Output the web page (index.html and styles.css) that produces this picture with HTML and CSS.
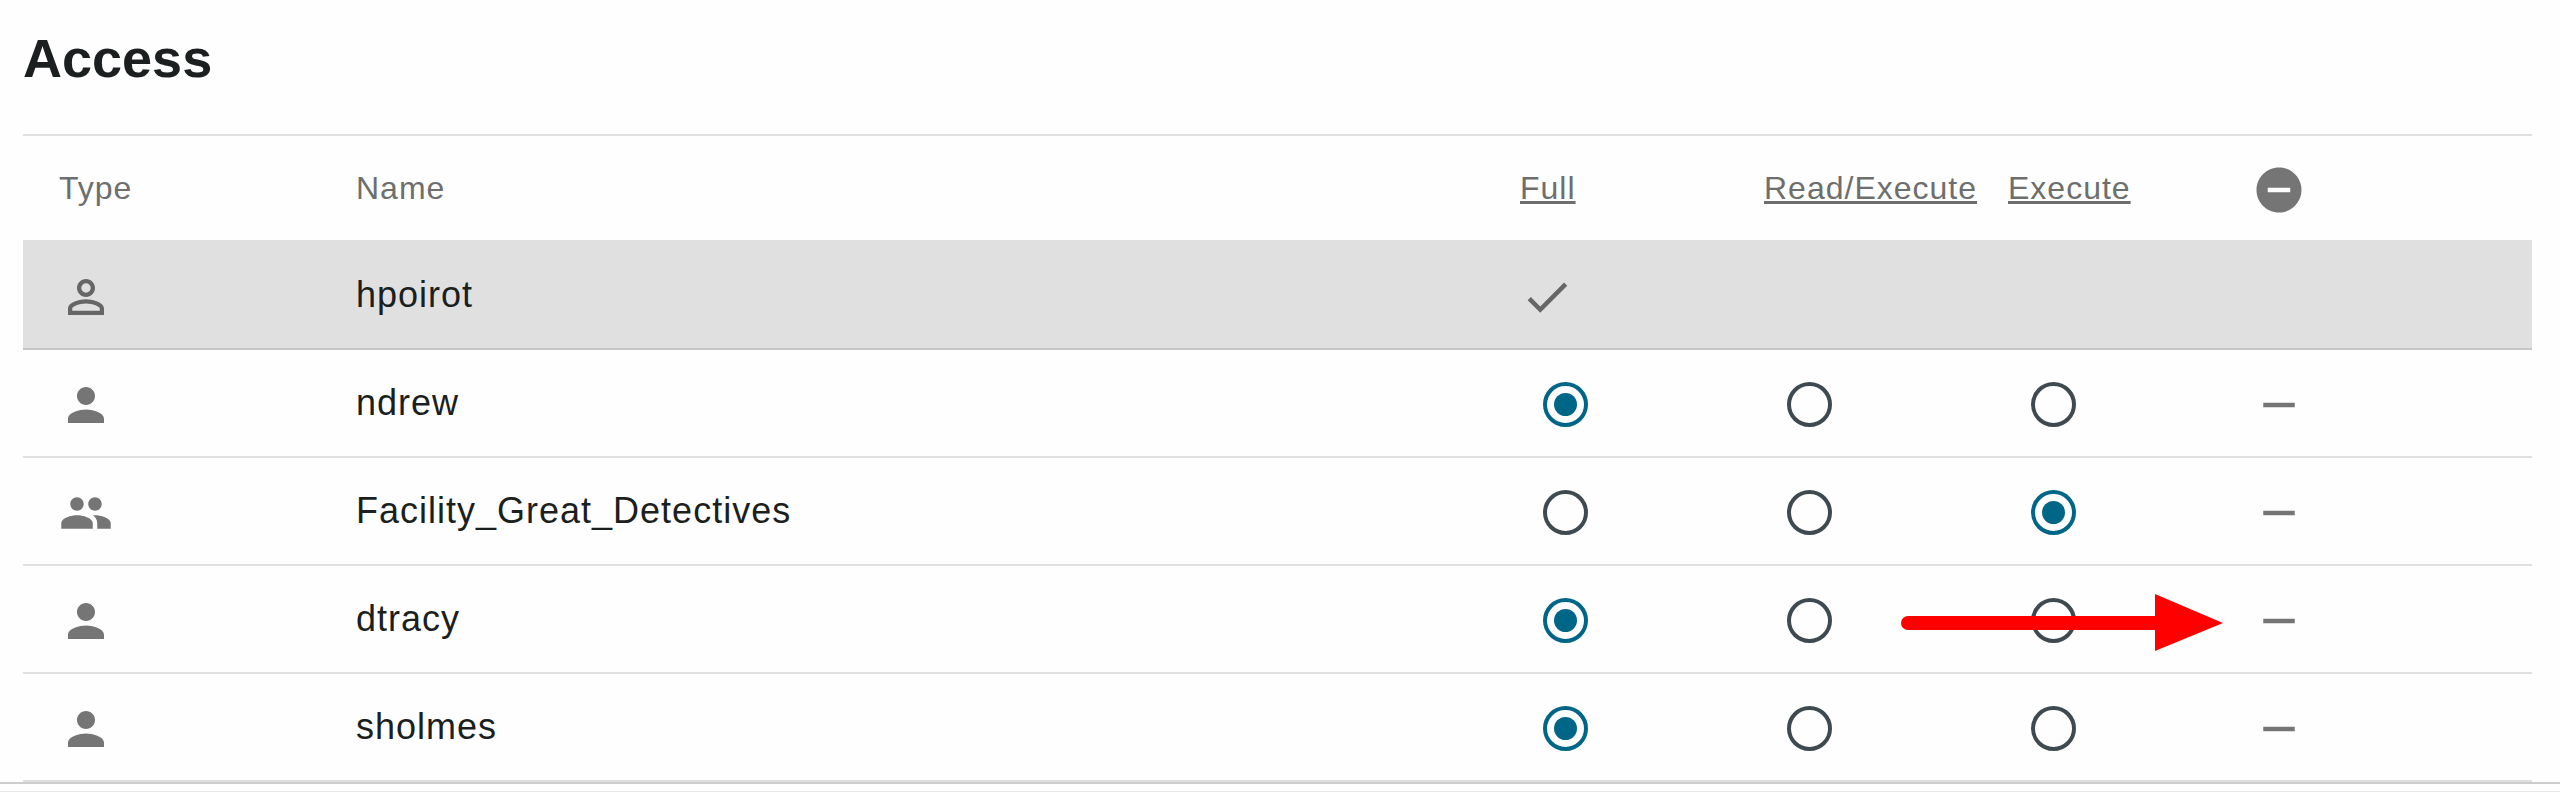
FILE: index.html
```html
<!DOCTYPE html>
<html lang="en">
<head>
<meta charset="utf-8">
<title>Access</title>
<link rel="stylesheet" href="styles.css">
</head>
<body>
<svg class="sprite" aria-hidden="true">
  <symbol id="person" viewBox="0 0 24 24"><path d="M12 12c2.21 0 4-1.79 4-4s-1.79-4-4-4-4 1.79-4 4 1.79 4 4 4zm0 2c-2.67 0-8 1.34-8 4v2h16v-2c0-2.66-5.33-4-8-4z"/></symbol>
  <symbol id="owner" viewBox="0 0 24 24"><path d="M12 5.9a2.1 2.1 0 1 1 0 4.2 2.1 2.1 0 0 1 0-4.2m0 9c2.97 0 6.1 1.46 6.1 2.1v1.1H5.9V17c0-.64 3.13-2.1 6.1-2.1M12 4C9.79 4 8 5.79 8 8s1.79 4 4 4 4-1.79 4-4-1.79-4-4-4zm0 9c-2.67 0-8 1.34-8 4v3h16v-3c0-2.66-5.33-4-8-4z"/></symbol>
  <symbol id="group" viewBox="0 0 24 24"><path d="M16 11c1.66 0 2.99-1.34 2.99-3S17.66 5 16 5s-3 1.34-3 3 1.34 3 3 3zm-8 0c1.66 0 2.99-1.34 2.99-3S9.66 5 8 5 5 6.34 5 8s1.34 3 3 3zm0 2c-2.33 0-7 1.17-7 3.5V19h14v-2.5c0-2.33-4.67-3.5-7-3.5zm8 0c-.29 0-.62.02-.97.05 1.16.84 1.97 1.97 1.97 3.45V19h6v-2.5c0-2.33-4.67-3.5-7-3.5z"/></symbol>
  <symbol id="check" viewBox="0 0 24 24"><path d="M9 16.17L4.83 12l-1.42 1.41L9 19 21 7l-1.41-1.41z"/></symbol>
  <symbol id="minus" viewBox="0 0 24 24"><path d="M5 11h14v2H5z"/></symbol>
  <symbol id="minus-circle" viewBox="0 0 24 24"><path d="M12 2C6.48 2 2 6.48 2 12s4.48 10 10 10 10-4.48 10-10S17.52 2 12 2zm5 11H7v-2h10v2z"/></symbol>
</svg>
<main class="panel">
  <h1 class="title">Access</h1>
  <table class="access">
    <colgroup><col class="col-type"><col><col class="col-level"><col class="col-level"><col class="col-level"><col class="col-remove"></colgroup>
    <thead>
      <tr>
        <th scope="col">Type</th>
        <th scope="col">Name</th>
        <th scope="col"><a href="#full">Full</a></th>
        <th scope="col"><a href="#read">Read/Execute</a></th>
        <th scope="col"><a href="#execute">Execute</a></th>
        <th scope="col" class="icon-cell"><button type="button" class="icon-button" aria-label="Remove all"><svg class="icon"><use href="#minus-circle"/></svg></button></th>
      </tr>
    </thead>
    <tbody>
      <tr class="owner">
        <td class="icon-cell"><svg class="icon" role="img" aria-label="Owner"><use href="#owner"/></svg></td>
        <td>hpoirot</td>
        <td class="icon-cell"><svg class="icon" role="img" aria-label="Full access"><use href="#check"/></svg></td>
        <td></td>
        <td></td>
        <td></td>
      </tr>
      <tr>
        <td class="icon-cell"><svg class="icon" role="img" aria-label="User"><use href="#person"/></svg></td>
        <td>ndrew</td>
        <td><input class="radio" type="radio" name="ndrew" aria-label="Full" checked></td>
        <td><input class="radio" type="radio" name="ndrew" aria-label="Read/Execute"></td>
        <td><input class="radio" type="radio" name="ndrew" aria-label="Execute"></td>
        <td class="icon-cell"><button type="button" class="icon-button" aria-label="Remove ndrew"><svg class="icon"><use href="#minus"/></svg></button></td>
      </tr>
      <tr>
        <td class="icon-cell"><svg class="icon" role="img" aria-label="Group"><use href="#group"/></svg></td>
        <td>Facility_Great_Detectives</td>
        <td><input class="radio" type="radio" name="detectives" aria-label="Full"></td>
        <td><input class="radio" type="radio" name="detectives" aria-label="Read/Execute"></td>
        <td><input class="radio" type="radio" name="detectives" aria-label="Execute" checked></td>
        <td class="icon-cell"><button type="button" class="icon-button" aria-label="Remove Facility_Great_Detectives"><svg class="icon"><use href="#minus"/></svg></button></td>
      </tr>
      <tr>
        <td class="icon-cell"><svg class="icon" role="img" aria-label="User"><use href="#person"/></svg></td>
        <td>dtracy</td>
        <td><input class="radio" type="radio" name="dtracy" aria-label="Full" checked></td>
        <td><input class="radio" type="radio" name="dtracy" aria-label="Read/Execute"></td>
        <td class="marked"><input class="radio" type="radio" name="dtracy" aria-label="Execute"><svg class="arrow" viewBox="0 0 322 58" aria-hidden="true"><path d="M7 22H254V0L322 29 254 57V36H7a7 7 0 0 1 0-14z"/></svg></td>
        <td class="icon-cell"><button type="button" class="icon-button" aria-label="Remove dtracy"><svg class="icon"><use href="#minus"/></svg></button></td>
      </tr>
      <tr>
        <td class="icon-cell"><svg class="icon" role="img" aria-label="User"><use href="#person"/></svg></td>
        <td>sholmes</td>
        <td><input class="radio" type="radio" name="sholmes" aria-label="Full" checked></td>
        <td><input class="radio" type="radio" name="sholmes" aria-label="Read/Execute"></td>
        <td><input class="radio" type="radio" name="sholmes" aria-label="Execute"></td>
        <td class="icon-cell"><button type="button" class="icon-button" aria-label="Remove sholmes"><svg class="icon"><use href="#minus"/></svg></button></td>
      </tr>
    </tbody>
  </table>
</main>
<footer class="next-panel"></footer>
</body>
</html>
```

FILE: styles.css
```css
* {
  box-sizing: border-box;
}

body {
  margin: 0;
  background: #fefefe;
  color: #1b1f20;
  font-family: "Liberation Sans", Arial, sans-serif;
}

.sprite {
  display: none;
}

.panel {
  padding: 27px 28px 0 23px;
  border-bottom: 2px solid #cccccc;
}

.title {
  margin: 0 0 45px;
  font-size: 54px;
  line-height: 62px;
}

.access {
  width: 100%;
  table-layout: fixed;
  border-collapse: separate;
  border-spacing: 0;
  border-top: 2px solid #e0e0e0;
  font-size: 36px;
  line-height: 42px;
  letter-spacing: 1px;
}

.col-type {
  width: 297px;
}

.col-level {
  width: 244px;
}

.col-remove {
  width: 316px;
}

.access th,
.access td {
  height: 108px;
  padding: 0 0 0 36px;
  border-bottom: 2px solid #e0e0e0;
  text-align: left;
  vertical-align: middle;
  white-space: nowrap;
}

.access th {
  height: 106px;
  color: #6e6e6e;
  font-size: 32px;
  font-weight: 400;
}

.access th a {
  color: inherit;
  text-decoration: underline 3px;
  text-decoration-skip-ink: none;
  text-underline-offset: 2px;
}

.access .owner td {
  background: #e0e0e0;
  border-bottom-color: #c6c6c6;
}

.access .icon-cell {
  padding-top: 4px;
}

.icon {
  display: block;
  width: 54px;
  height: 54px;
  fill: #757575;
}

.owner .icon {
  fill: #666666;
}

.icon-button {
  display: block;
  padding: 0;
  border: 0;
  background: none;
  cursor: pointer;
}

.radio {
  appearance: none;
  display: grid;
  place-items: center;
  width: 45px;
  height: 45px;
  margin: 2px 0 0 23px;
  border: 4px solid #3f4a50;
  border-radius: 50%;
}

.radio:checked {
  border-color: #006687;
}

.radio:checked::before {
  content: "";
  width: 23px;
  height: 23px;
  border-radius: 50%;
  background: #006687;
}

.marked {
  position: relative;
}

.arrow {
  position: absolute;
  top: 28px;
  left: -71px;
  width: 322px;
  height: 58px;
  fill: #ff0000;
  pointer-events: none;
}

.next-panel {
  margin-top: 7px;
  border-top: 1px solid #e8e8e8;
}
```
